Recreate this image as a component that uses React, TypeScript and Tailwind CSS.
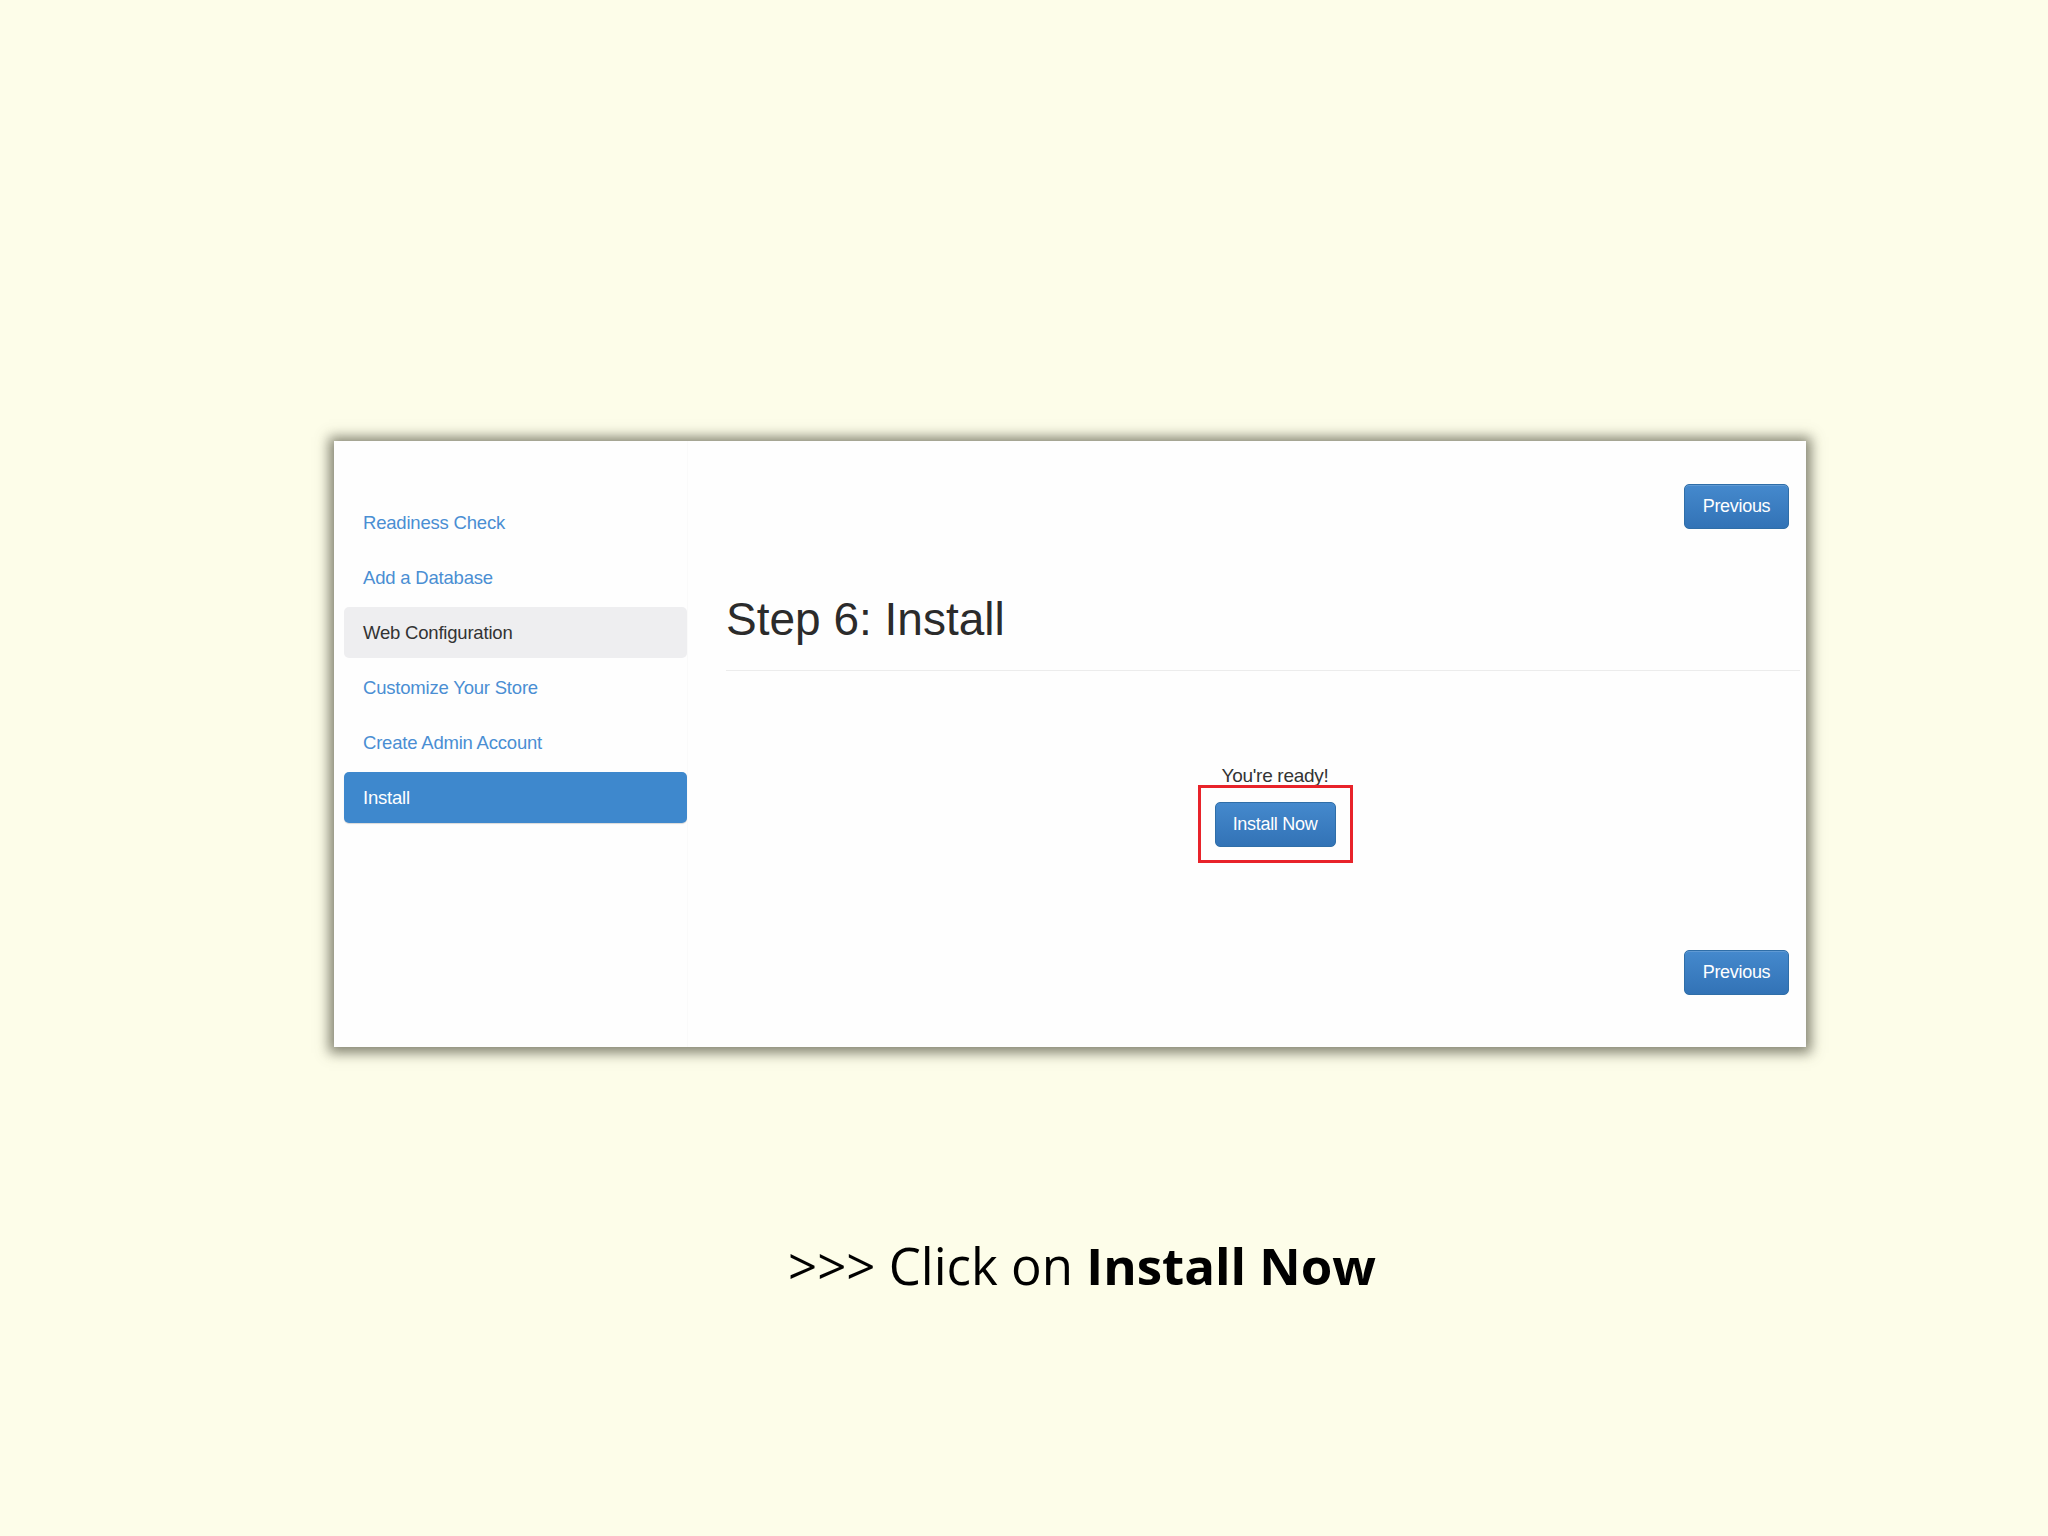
import React from "react";

/* ---- Data ---- */
const STEPS = [
  { id: "readiness", label: "Readiness Check", state: "link" },
  { id: "database", label: "Add a Database", state: "link" },
  { id: "web", label: "Web Configuration", state: "hover" },
  { id: "store", label: "Customize Your Store", state: "link" },
  { id: "admin", label: "Create Admin Account", state: "link" },
  { id: "install", label: "Install", state: "active" },
] as const;

const PreviousButton = () => (
  <button className="w-[105px] h-[45px] rounded-[5px] border border-[#2f6ea8] bg-gradient-to-b from-[#4589cd] to-[#3273b6] text-white text-[18px] tracking-[-0.3px] shadow-[inset_0_1px_0_rgba(255,255,255,0.15)]">
    Previous
  </button>
);

const Sidebar = () => (
  <div className="w-[343px] flex flex-col gap-[4px] pt-[56px]">
    {STEPS.map((step) => (
      <div
        key={step.id}
        className={
          step.state === "active"
            ? "h-[51px] flex items-center pl-[19px] rounded-[5px] bg-[#3e88cd] text-white shadow-[0_1px_1px_rgba(0,0,0,0.15)]"
            : step.state === "hover"
            ? "h-[51px] flex items-center pl-[19px] rounded-[5px] bg-[#eeeef0] text-[#333333]"
            : "h-[51px] flex items-center pl-[19px] text-[#4a8ed3]"
        }
      >
        <span className="text-[18.5px] tracking-[-0.2px]">{step.label}</span>
      </div>
    ))}
  </div>
);

export default function App() {
  return (
    <div
      className="w-[2048px] h-[1536px] bg-[#fdfde9] flex flex-col pt-[441px] pl-[334px]"
      style={{ fontFamily: '"Liberation Sans", Arial, sans-serif' }}
    >
      {/* Screenshot panel */}
      <div className="w-[1472px] h-[606px] bg-[#fefefe] flex pl-[10px] shadow-[0_1px_12px_5px_rgba(100,100,82,0.8)]">
        <Sidebar />

        <div className="flex-1 flex flex-col border-l border-[#fafafa] pl-[38px]">
          <div className="flex justify-end pt-[43px] pr-[17px]">
            <PreviousButton />
          </div>

          <div className="mt-[67px] pb-[28px] border-b border-[#ececec] mr-[6px]">
            <h1 className="text-[46px] leading-[46px] text-[#2b2b2b]">Step 6: Install</h1>
          </div>

          <div className="flex flex-col items-center pl-[18px] mt-[95px]">
            <p className="text-[19px] leading-[19px] text-[#333333] tracking-[-0.3px]">You're ready!</p>
            <div className="border-[3px] border-[#e8232a] px-[14px] pt-[14px] pb-[13px]">
              <button className="w-[121px] h-[45px] rounded-[5px] border border-[#2f6ea8] bg-gradient-to-b from-[#4589cd] to-[#3273b6] text-white text-[18px] tracking-[-0.3px]">
                Install Now
              </button>
            </div>
          </div>

          <div className="mt-auto flex justify-end pr-[17px] pb-[52px]">
            <PreviousButton />
          </div>
        </div>
      </div>

      {/* Caption */}
      <div
        className="mt-[192px] -ml-[334px] flex justify-center pl-[116px] text-[51px] leading-[52px] text-black"
        style={{ fontFamily: '"Open Sans", sans-serif' }}
      >
        <span>
          &gt;&gt;&gt; Click on <b className="font-bold">Install Now</b>
        </span>
      </div>
    </div>
  );
}
